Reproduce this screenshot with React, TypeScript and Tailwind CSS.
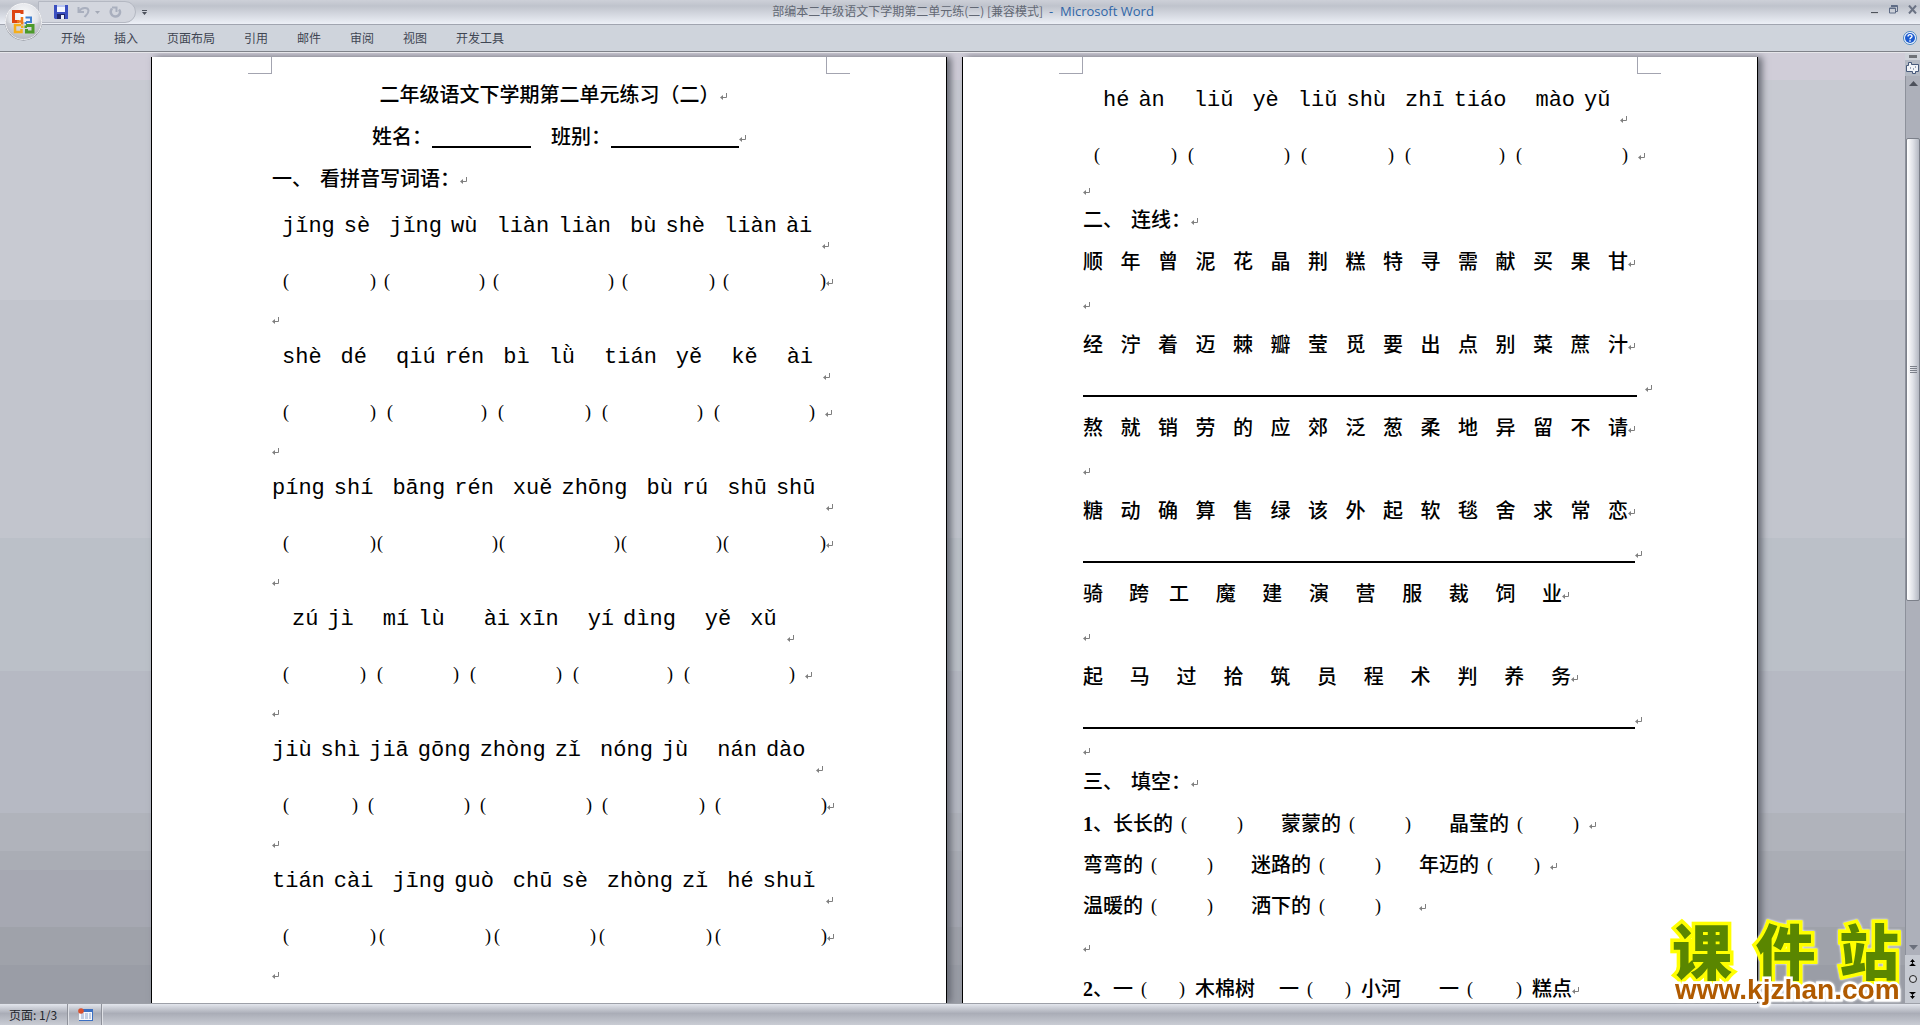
import clsx from "clsx";
import type { ReactNode } from "react";

const TABS = ["开始", "插入", "页面布局", "引用", "邮件", "审阅", "视图", "开发工具"];

interface Exercise {
  pinyin: string;
  blanks: number[];
  gap: string;
  markGap?: string;
}

const EXERCISES: Exercise[] = [
  { pinyin: " jǐng sè  jǐng wù  liàn liàn  bù shè  liàn ài", blanks: [93, 101, 121, 93, 103], gap: "gap-2" },
  { pinyin: " shè  dé   qiú rén  bì  lǜ   tián  yě   kě   ài", blanks: [93, 100, 93, 101, 101], gap: "gap-[11px]", markGap: "ml-[10px]" },
  { pinyin: "píng shí  bāng rén  xuě zhōng  bù rú  shū shū", blanks: [93, 121, 121, 101, 103], gap: "gap-px" },
  { pinyin: "  zú jì   mí lù    ài xīn   yí dìng   yě  xǔ", blanks: [83, 82, 92, 100, 111], gap: "gap-[11px]", markGap: "ml-[10px]" },
  { pinyin: "jiù shì jiā gōng zhòng zǐ  nóng jù   nán dào", blanks: [75, 102, 112, 103, 112], gap: "gap-[10px]" },
  { pinyin: "tián cài  jīng guò  chū sè  zhòng zǐ  hé shuǐ", blanks: [93, 112, 102, 113, 112], gap: "gap-[3px]" },
];

const LAST_EXERCISE: Exercise = {
  pinyin: "  hé àn   liǔ  yè  liǔ shù  zhī tiáo   mào yǔ",
  blanks: [83, 102, 93, 100, 112],
  gap: "gap-[11px]",
  markGap: "ml-[10px]",
};

function Mark({ className }: { className?: string }) {
  return (
    <svg className={clsx("h-2 w-[7px] shrink-0", className)} viewBox="0 0 7 8" aria-hidden="true">
      <path d="M6.5 0v4.5H2" fill="none" stroke="#7f7f7f" />
      <path d="M0 4.5 3 2v5z" fill="#7f7f7f" />
    </svg>
  );
}

function Row({ className, children }: { className?: string; children?: ReactNode }) {
  return <div className={clsx("flex items-center whitespace-pre", className)}>{children}</div>;
}

function EmptyRow({ className }: { className: string }) {
  return (
    <Row className={className}>
      <Mark className="mt-1" />
    </Row>
  );
}

function Blank({ width }: { width: number }) {
  return (
    <span className="flex shrink-0 justify-between text-[18px]" style={{ width }}>
      <span>(</span>
      <span>)</span>
    </span>
  );
}

function PinyinRow({ text }: { text: string }) {
  return (
    <Row className="h-14 items-start!">
      <p className="flex gap-[9px] font-['Liberation_Mono',monospace] text-[22px] leading-[53px] font-normal">
        {text.split(" ").map((syllable, i) => (
          <span key={i} className={clsx(!syllable && "w-px")}>
            {syllable}
          </span>
        ))}
      </p>
      <Mark className="mb-1.5 ml-[10px] self-end" />
    </Row>
  );
}

function ExerciseRows({ exercise }: { exercise: Exercise }) {
  return (
    <>
      <PinyinRow text={exercise.pinyin} />
      <Row className="h-[50px] pl-[11px]">
        <div className={clsx("flex", exercise.gap)}>
          {exercise.blanks.map((width, i) => (
            <Blank key={i} width={width} />
          ))}
        </div>
        <Mark className={clsx("mt-1", exercise.markGap)} />
      </Row>
    </>
  );
}

function Heading({ index, title }: { index: string; title: string }) {
  return (
    <Row className="h-[42px]">
      <h2 className="flex gap-2">
        <span>{index}</span>
        <span>{title}</span>
      </h2>
      <Mark className="mt-1" />
    </Row>
  );
}

function Characters({ text, className }: { text: string; className: string }) {
  return (
    <span className={clsx("flex justify-between", className)}>
      {text.split("").map((char, i) => (
        <span key={i}>{char}</span>
      ))}
    </span>
  );
}

function CharacterRow({ text }: { text: string }) {
  return (
    <Row className="h-[42px]">
      <Characters text={text} className="w-[545px]" />
      <Mark className="mt-1" />
    </Row>
  );
}

function RuleRow({ className, markGap }: { className: string; markGap?: string }) {
  return (
    <Row className="h-[41px] items-end! pb-[10px]">
      <span className={clsx("h-0.5 shrink-0 bg-black", className)} />
      <Mark className={clsx("mb-1", markGap)} />
    </Row>
  );
}

interface PhraseProps {
  number?: string;
  text: string;
  blank: number;
  after?: string;
}

function Phrase({ number, text, blank, after }: PhraseProps) {
  return (
    <span className="flex items-center">
      <span>
        {number && <b>{number}</b>}
        {text}
      </span>
      <span className="ml-2">
        <Blank width={blank} />
      </span>
      {after && <span className="ml-[10px]">{after}</span>}
    </span>
  );
}

function Page({ children }: { children: ReactNode }) {
  return (
    <article className="relative w-[796px] shrink-0 border-x border-black bg-white px-[120px] pt-[17px] font-['Liberation_Serif','Noto_Sans_CJK_SC',serif] text-[20px] leading-[30px] font-medium text-black shadow-[4px_0_7px_#666973]">
      <span className="absolute top-0 left-24 h-[17px] w-6 border-r border-b border-[#a3a4b0]" />
      <span className="absolute top-0 right-24 h-[17px] w-6 border-b border-l border-[#a3a4b0]" />
      {children}
    </article>
  );
}

function FirstPage() {
  return (
    <Page>
      <Row className="h-[42px] justify-center pl-2">
        <h1>二年级语文下学期第二单元练习（二）</h1>
        <Mark className="mt-1" />
      </Row>
      <Row className="h-[42px] justify-center pl-5">
        <span>姓名：</span>
        <span className="mt-5 h-0.5 w-[99px] bg-black" />
        <span className="ml-5">班别：</span>
        <span className="mt-5 h-0.5 w-32 bg-black" />
        <Mark className="mt-1" />
      </Row>
      <Heading index="一、" title="看拼音写词语：" />
      {EXERCISES.map((exercise) => (
        <div key={exercise.pinyin}>
          <ExerciseRows exercise={exercise} />
          <EmptyRow className="h-[25px]" />
        </div>
      ))}
    </Page>
  );
}

function SecondPage() {
  return (
    <Page>
      <ExerciseRows exercise={LAST_EXERCISE} />
      <EmptyRow className="h-[19px]" />
      <Heading index="二、" title="连线：" />
      <CharacterRow text="顺年曾泥花晶荆糕特寻需献买果甘" />
      <EmptyRow className="h-[41px]" />
      <CharacterRow text="经泞着迈棘瓣莹觅要出点别菜蔗汁" />
      <RuleRow className="w-[554px]" markGap="ml-2" />
      <CharacterRow text="熬就销劳的应郊泛葱柔地异留不请" />
      <EmptyRow className="h-[41px]" />
      <CharacterRow text="糖动确算售绿该外起软毯舍求常恋" />
      <RuleRow className="w-[552px]" />
      <Row className="h-[42px]">
        <span className="flex gap-5">
          <Characters text="骑跨" className="w-[66px]" />
          <Characters text="工魔建演营服裁饲业" className="w-[393px]" />
        </span>
        <Mark className="mt-1" />
      </Row>
      <EmptyRow className="h-[41px]" />
      <Row className="h-[42px]">
        <Characters text="起马过拾筑员程术判养务" className="w-[488px]" />
        <Mark className="mt-1" />
      </Row>
      <RuleRow className="w-[552px]" />
      <EmptyRow className="h-[22px]" />
      <Heading index="三、" title="填空：" />
      <Row className="h-[41px]">
        <span className="flex gap-[38px]">
          <Phrase number="1" text="、长长的" blank={62} />
          <Phrase text="蒙蒙的" blank={62} />
          <Phrase text="晶莹的" blank={62} />
        </span>
        <Mark className="mt-1 ml-[10px]" />
      </Row>
      <Row className="h-[41px]">
        <span className="flex gap-[38px]">
          <Phrase text="弯弯的" blank={62} />
          <Phrase text="迷路的" blank={62} />
          <Phrase text="年迈的" blank={53} />
        </span>
        <Mark className="mt-1 ml-[10px]" />
      </Row>
      <Row className="h-[41px]">
        <span className="flex gap-[38px]">
          <Phrase text="温暖的" blank={62} />
          <Phrase text="洒下的" blank={62} />
        </span>
        <Mark className="mt-1 ml-[38px]" />
      </Row>
      <EmptyRow className="h-[42px]" />
      <Row className="h-[41px]">
        <Phrase number="2" text="、一" blank={44} after="木棉树" />
        <span className="ml-6">
          <Phrase text="一" blank={44} after="小河" />
        </span>
        <span className="ml-[38px]">
          <Phrase text="一" blank={55} after="糕点" />
        </span>
        <Mark className="mt-1" />
      </Row>
    </Page>
  );
}

function OfficeButton() {
  return (
    <button type="button" aria-label="Office 按钮" className="absolute top-0.5 left-1 z-10">
      <svg className="size-[39px]" viewBox="0 0 39 39">
        <defs>
          <radialGradient id="orb" cx="50%" cy="35%" r="65%">
            <stop offset="0" stopColor="#ffffff" />
            <stop offset="0.6" stopColor="#e3e5ea" />
            <stop offset="1" stopColor="#a8abb3" />
          </radialGradient>
        </defs>
        <circle cx="19.5" cy="20" r="18.5" fill="#7d8088" />
        <circle cx="19.5" cy="19.5" r="18" fill="url(#orb)" stroke="#f7f7f9" />
        <path d="M2 20a17.500 17.500 0 0 0 35 0c-8 3-27 3-35 0z" fill="#c3c6cd" opacity=".5" />
        <g fill="none">
          <path d="M18 12V9.500H9.500v10H15" stroke="#dd4512" strokeWidth="3" />
          <path d="M13 19.500h5V15" stroke="#ef7a1c" strokeWidth="2.500" />
          <path d="M21.500 15.500H27V20h-5" stroke="#3f7fd0" strokeWidth="2" />
          <path d="M17 23h-6v7h6.500v-3" stroke="#f5ae1b" strokeWidth="2.500" />
          <path d="M22 23.500h7v6.500h-6.500v-3" stroke="#4c9a2a" strokeWidth="3" />
        </g>
        <path d="M17 20h2.500v2.500H17z" fill="#ef7a1c" />
        <path d="M20.500 20H23v2h-2.500z" fill="#3f7fd0" />
        <path d="M17 23.500h2.500V26H17z" fill="#f5ae1b" />
        <path d="M20.500 23.500H23V26h-2.500z" fill="#4c9a2a" />
      </svg>
    </button>
  );
}

function QuickAccess() {
  return (
    <div className="ml-[38px] flex h-[22px] w-[98px] items-center rounded-r-full border border-[#b4b8c2] bg-[#d3d6de] pl-[15px]">
      <button type="button" aria-label="保存">
        <svg className="size-[14px]" viewBox="0 0 14 14">
          <path d="M0 0h14v14H1l-1-1z" fill="#3b4fc0" />
          <path d="M3 0h8v7H3z" fill="#f3f6ff" />
          <path d="M3 0h8v2H3z" fill="#b9c6f2" />
          <path d="M3 9h8v5H3z" fill="#20266a" />
          <path d="M7 10h3v4H7z" fill="#eef1fb" />
        </svg>
      </button>
      <button type="button" aria-label="撤消" className="ml-[9px]">
        <svg className="h-3 w-[13px]" viewBox="0 0 13 12" fill="none" stroke="#a9afbe" strokeWidth="2">
          <path d="M1.500 1v5H7" />
          <path d="M2 5.500C5 1 11 1 11.500 4.500 11.500 8 9 9 7.500 11" />
        </svg>
      </button>
      <svg className="ml-[5px] h-[3px] w-[5px]" viewBox="0 0 5 3">
        <path d="M0 0h5L2.500 3z" fill="#a4a9b6" />
      </svg>
      <button type="button" aria-label="恢复" className="ml-[9px]">
        <svg className="h-3 w-[13px]" viewBox="0 0 13 12" fill="none" stroke="#a9afbe" strokeWidth="2.500">
          <path d="M3 2.500c-3 4 0 8 3.500 8s6-4 3.500-7" />
          <path d="M3 1.500h4.500V6" strokeWidth="2" />
        </svg>
      </button>
    </div>
  );
}

function TitleBar() {
  return (
    <header className="relative flex h-[25px] shrink-0 items-center border-b border-[#a1a5b0] bg-linear-to-b from-[#cdd0d8] via-[#bfc3cc] via-25% to-[#edf0f7]">
      <QuickAccess />
      <button type="button" aria-label="自定义快速访问工具栏" className="ml-1.5">
        <svg className="h-[5px] w-[5px]" viewBox="0 0 5 5" fill="#4b505b">
          <path d="M0 0h5v1H0zM0 2h5L2.500 5z" />
        </svg>
      </button>
      <h1 className="flex-1 pr-[92px] text-center text-[12px] text-[#626874]">
        部编本二年级语文下学期第二单元练(二) [兼容模式]
        <span className="ml-1.5 font-['Open_Sans',sans-serif] text-[13px] text-[#2f66a8]">-&nbsp; Microsoft Word</span>
      </h1>
      <div className="flex gap-[10px] pr-[3px] pb-1.5">
        <button type="button" aria-label="最小化">
          <svg className="h-[9px] w-2" viewBox="0 0 8 9">
            <path d="M0 7h7v1.500H0z" fill="#4e535c" />
            <path d="M0 8.500h7V9H0z" fill="#fff" />
          </svg>
        </button>
        <button type="button" aria-label="还原">
          <svg className="h-[9px] w-[9px]" viewBox="0 0 9 9" fill="none" stroke="#5f6c86">
            <path d="M2 .5h6.500v6H7M2 1.500h6" />
            <path d="M.5 3h6v5h-6zM.5 3.500h6" />
          </svg>
        </button>
        <button type="button" aria-label="关闭">
          <svg className="size-[9px]" viewBox="0 0 9 9" stroke="#6b7384" strokeWidth="2">
            <path d="M1 .5l7 8M8 .5l-7 8" />
          </svg>
        </button>
      </div>
    </header>
  );
}

function Ribbon() {
  return (
    <nav className="flex h-[27px] shrink-0 items-center border-b border-[#7f8289] bg-[#cfd4dc] pl-[61px]">
      <div className="flex flex-1 gap-[29px]">
        {TABS.map((tab) => (
          <button key={tab} type="button" className="text-[12px] text-[#3f4653]">
            {tab}
          </button>
        ))}
      </div>
      <button type="button" aria-label="帮助" className="mr-[3px]">
        <svg className="size-[14px]" viewBox="0 0 14 14">
          <circle cx="7" cy="7" r="6.500" fill="#f5f9ff" stroke="#4d86c0" />
          <circle cx="7" cy="7" r="5" fill="#1c5bd0" />
          <path d="M5 5.500C5 3 9 3 9 5.300 9 6.800 7 6.600 7 8.300M7 9.300v1.500" fill="none" stroke="#fff" strokeWidth="1.400" />
        </svg>
      </button>
    </nav>
  );
}

function ScrollBar() {
  return (
    <aside className="flex w-[15px] shrink-0 flex-col bg-[#c6cad2]">
      <div className="flex h-[7px] items-center justify-center bg-[#cfd3da]">
        <span className="h-[3px] w-2 bg-[#6f7278]" />
      </div>
      <button type="button" aria-label="标尺" className="flex h-4 items-center justify-center bg-[#b5bac4]">
        <svg className="h-3 w-[13px]" viewBox="0 0 13 12" fill="#f1f3f7" stroke="#47597a">
          <path d="M2.500 .5h3v2h7v7h-3v2h-3v-2h-6v-6h2z" />
          <path d="M4.500 5.500v1M7.500 6.500v1M9.500 4.500v1" />
        </svg>
      </button>
      <div className="flex min-h-0 flex-1 flex-col items-center border-l border-[#8d919b] bg-[#adb0ba]">
        <svg className="mt-[5px] h-[5px] w-[9px] shrink-0" viewBox="0 0 9 5">
          <path d="M4.500 0 9 5H0z" fill="#4d515b" />
        </svg>
        <div className="flex min-h-0 w-full flex-1 flex-col pt-[52px] pb-2">
          <div className="flex h-[58%] w-full flex-col items-center justify-center gap-px rounded-[2px] border border-[#7c808a] bg-linear-to-r from-white via-[#dfe1e7] to-[#b4b8c2]">
            <span className="h-px w-[7px] bg-[#7c808a]" />
            <span className="h-px w-[7px] bg-[#7c808a]" />
            <span className="h-px w-[7px] bg-[#7c808a]" />
            <span className="h-px w-[7px] bg-[#7c808a]" />
          </div>
        </div>
        <svg className="mb-[5px] h-[5px] w-[9px] shrink-0" viewBox="0 0 9 5">
          <path d="M0 0h9L4.500 5z" fill="#6b707c" />
        </svg>
      </div>
      <div className="flex h-12 flex-col items-center justify-around">
        <button type="button" aria-label="前一页">
          <svg className="block h-2 w-[7px]" viewBox="0 0 7 8">
            <path d="M3.500 0 6 3H4v1H3V3H1zM3.500 4 7 7H0z" />
          </svg>
        </button>
        <button type="button" aria-label="选择浏览对象">
          <svg className="block size-2" viewBox="0 0 8 8">
            <circle cx="4" cy="4" r="3.500" fill="#d5d8de" stroke="#222" />
          </svg>
        </button>
        <button type="button" aria-label="下一页">
          <svg className="block h-2 w-[7px]" viewBox="0 0 7 8">
            <path d="M0 1h7L3.500 4zM3 4h1v1h2L3.500 8 1 5h2z" />
          </svg>
        </button>
      </div>
    </aside>
  );
}

function StatusBar() {
  return (
    <footer className="flex h-[22px] shrink-0 items-center border-t border-[#9da0a8] bg-linear-to-b from-[#e3e6ed] via-[#aaadb7] via-45% to-[#c9ccd4]">
      <span className="flex h-full w-[68px] items-center border-r border-[#8f929b] pl-[9px] text-[12px] text-[#23262d]">
        页面: 1/3
      </span>
      <button type="button" aria-label="宏录制" className="flex h-full w-[34px] items-center justify-center border-r border-l border-[#8f929b] border-l-[#dfe1e6]">
        <svg className="h-[13px] w-[15px]" viewBox="0 0 15 13">
          <path d="M1 1h14v12H1z" fill="#f6f8fd" />
          <path d="M1 1h14v3H1zM14 1h1v12h-1zM1 12h14v1H1z" fill="#3b6fc2" />
          <path d="M3 6h3M7 6h3M11 6h2M3 8h3M7 8h3M11 8h2M3 10h3M7 10h3M11 10h2" stroke="#8fa5cc" />
          <circle cx="3" cy="3" r="2.800" fill="#d9502e" />
        </svg>
      </button>
      <span className="h-full w-px bg-[#dfe1e6]" />
    </footer>
  );
}

function Watermark() {
  return (
    <div className="absolute right-[21px] bottom-[21px] z-10 w-[227px] drop-shadow-[0_0_1px_#ffffff]">
      <div className="flex justify-between text-[60px] leading-[54px] font-black text-[#5a8600] [-webkit-text-stroke:7px_#ffff00] [paint-order:stroke_fill]">
        <span>课</span>
        <span>件</span>
        <span>站</span>
      </div>
      <a
        href="#"
        className="block pl-[3px] font-['Liberation_Sans',sans-serif] text-[28px] leading-7 font-bold text-[#b05a00] [-webkit-text-stroke:5px_#ffffff] [paint-order:stroke_fill]"
      >
        www.kjzhan.com
      </a>
    </div>
  );
}

export default function App() {
  return (
    <div className="relative flex h-screen flex-col overflow-hidden font-['Noto_Sans_CJK_SC',sans-serif]">
      <OfficeButton />
      <TitleBar />
      <Ribbon />
      <div className="flex min-h-0 flex-1 border-t border-[#e6e6ea]">
        <main className="flex min-w-0 flex-1 justify-center gap-[15px] overflow-hidden bg-[linear-gradient(#d0cdd8_27px,#c8cad2_27px_26%,#c2c5cd_26%_51%,#bbc0c8_51%_65%,#b6b9c3_65%_80%,#b0b3bb_80%_84%,#aaadb5_84%_86%,#a6a8b2_86%_92%,#9fa2aa_92%_96%,#9a9da6_96%)] pt-1 pl-1">
          <FirstPage />
          <SecondPage />
        </main>
        <ScrollBar />
      </div>
      <StatusBar />
      <Watermark />
    </div>
  );
}
